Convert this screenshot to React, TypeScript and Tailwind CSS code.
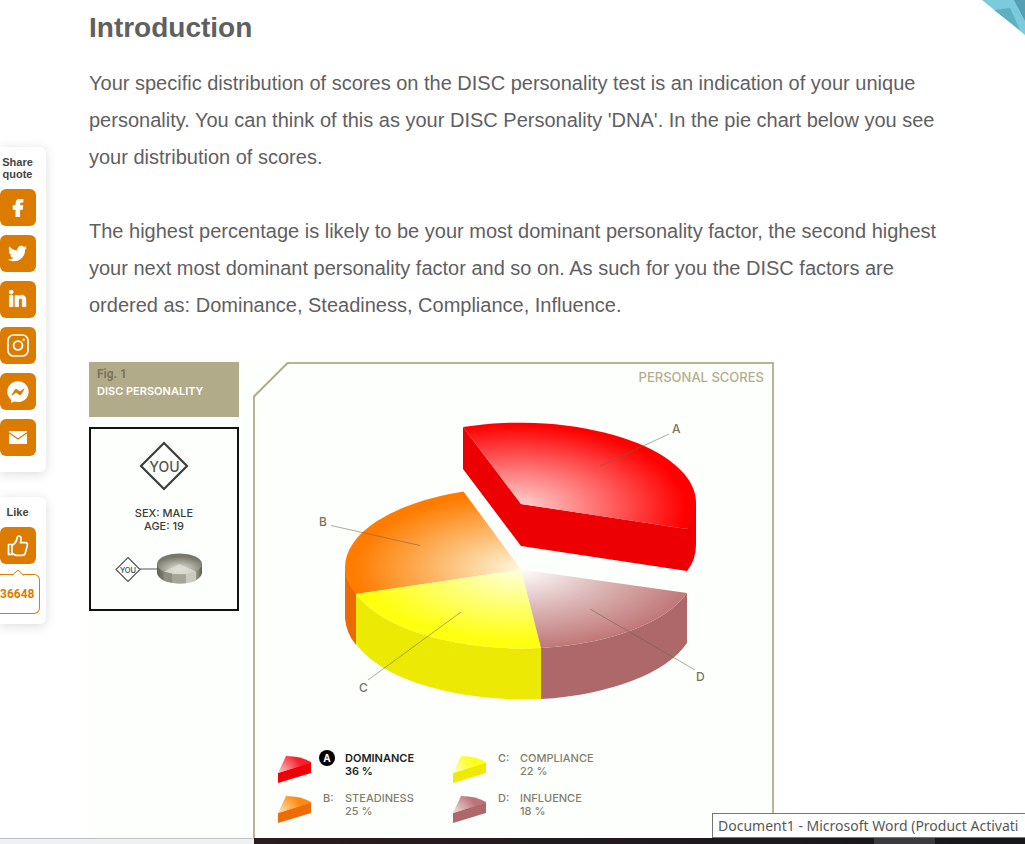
import type { ReactNode } from "react";
import {
  FaFacebookF,
  FaFacebookMessenger,
  FaLinkedinIn,
  FaTwitter,
} from "react-icons/fa";

function InstagramIcon() {
  return (
    <svg width="22" height="23" viewBox="0 0 22 23" fill="none" stroke="white" aria-hidden="true">
      <rect x="1" y="1" width="20" height="21" rx="5.5" strokeWidth="1.7" />
      <circle cx="11" cy="11.5" r="4.4" strokeWidth="1.9" />
      <circle cx="16.7" cy="5.8" r="1.2" fill="white" stroke="none" />
    </svg>
  );
}

function MailIcon() {
  return (
    <svg width="18" height="13" viewBox="0 0 18 13" aria-hidden="true">
      <rect width="18" height="13" fill="white" />
      <path d="M0 1.8 L9 8 L18 1.8" fill="none" stroke="#db7c00" strokeWidth="1.3" />
    </svg>
  );
}

function ThumbIcon() {
  return (
    <svg
      width="22"
      height="23"
      viewBox="0 0 22 23"
      fill="none"
      stroke="white"
      strokeWidth="1.7"
      strokeLinejoin="round"
      aria-hidden="true"
    >
      <path d="M1.5 10.5 H5 V20.5 H1.5 Z" />
      <path d="M5 11.5 C8 9.5 9.5 7.5 10 4.5 C10.2 2.6 10.8 2 12 2 C14.6 2.2 14.8 5 13.4 8.7 H18.5 C20.2 8.7 20.8 10 20.3 11.5 L18.3 19 C17.9 20.5 17 21.3 15.5 21.3 H9.5 C7.5 21.3 7 19.6 5 19.6" />
      <path d="M3 18.5 V18.7" />
    </svg>
  );
}

const shareLinks: { label: string; icon: ReactNode }[] = [
  { label: "Facebook", icon: <FaFacebookF size={18} stroke="white" strokeWidth={30} /> },
  { label: "Twitter", icon: <FaTwitter size={19} /> },
  { label: "LinkedIn", icon: <FaLinkedinIn size={19} stroke="white" strokeWidth={20} /> },
  { label: "Instagram", icon: <InstagramIcon /> },
  { label: "Messenger", icon: <FaFacebookMessenger size={22} /> },
  { label: "Email", icon: <MailIcon /> },
];

function SideButton({ label, children }: { label: string; children: ReactNode }) {
  return (
    <button
      type="button"
      aria-label={label}
      className="flex h-[37px] w-9 items-center justify-center rounded-md bg-[#db7c00] pr-px text-white"
    >
      {children}
    </button>
  );
}

function ShareBar() {
  return (
    <aside className="flex w-[46px] shrink-0 flex-col gap-[25px] pt-[147px] font-['Liberation_Sans',Arial,sans-serif] text-[11px] leading-3 font-bold text-[#444]">
      <section className="rounded-r-md bg-white pt-[9px] pb-4 shadow-[0_2px_12px_rgba(0,0,0,0.14)]">
        <h2 className="w-[35px] text-center">Share quote</h2>
        <div className="mt-[9px] flex flex-col gap-[9px]">
          {shareLinks.map((s) => (
            <SideButton key={s.label} label={s.label}>
              {s.icon}
            </SideButton>
          ))}
        </div>
      </section>
      <section className="rounded-r-md bg-white pt-[9px] pb-[10px] shadow-[0_2px_12px_rgba(0,0,0,0.14)]">
        <h2 className="mb-[9px] w-[35px] text-center">Like</h2>
        <SideButton label="Like">
          <ThumbIcon />
        </SideButton>
        <div className="relative mt-[10px] flex h-10 w-10 items-center rounded-r-md border border-l-0 border-[#db7c00]">
          <svg className="absolute -top-[6px] left-3" width="12" height="7" viewBox="0 0 12 7" aria-hidden="true">
            <path d="M0 6.500 L6 1 L12 6.500 V7 H0 Z" fill="white" />
            <path d="M0 6.500 L6 1 L12 6.500" fill="none" stroke="#db7c00" />
          </svg>
          <span className="text-xs text-[#db7c00] font-['Roboto',sans-serif]">36648</span>
        </div>
      </section>
    </aside>
  );
}

function ProfileCard() {
  return (
    <div className="flex h-[184px] flex-col items-center border-2 border-[#111] text-xs leading-[13px] font-medium text-[#3c3c38]">
      <svg className="mt-3" width="50" height="50" viewBox="0 0 50 50" aria-hidden="true">
        <path d="M25 2 L48 25 L25 48 L2 25 Z" fill="none" stroke="#3c3c3c" strokeWidth="2.2" />
        <text x="25.500" y="30.500" textAnchor="middle" fontSize="14" fontWeight="500" fill="#555">
          YOU
        </text>
      </svg>
      <p className="mt-4 text-center text-[11px]">
        SEX: MALE
        <br />
        AGE: 19
      </p>
      <svg className="mt-[18px] mr-[9px] shrink-0" width="90" height="36" viewBox="0 0 90 36" aria-hidden="true">
        <defs>
          <linearGradient id="coinSide">
            <stop offset="0" stopColor="#5f5f4c" />
            <stop offset="0.18" stopColor="#88887a" />
            <stop offset="0.5" stopColor="#b5b5aa" />
            <stop offset="0.75" stopColor="#d0d0c8" />
            <stop offset="1" stopColor="#5c5c48" />
          </linearGradient>
          <radialGradient id="coinTop" cx="0.5" cy="0.75" r="0.6">
            <stop offset="0" stopColor="#e6e6e0" />
            <stop offset="1" stopColor="#77776a" />
          </radialGradient>
        </defs>
        <path d="M13 6.5 L25 18.5 L13 30.5 L1 18.5 Z" fill="none" stroke="#555" strokeWidth="1.2" />
        <text x="13" y="21.5" textAnchor="middle" fontSize="7.5" fill="#444">
          YOU
        </text>
        <path d="M25 18 H42" stroke="#555" />
        <path d="M42 12 V22 C44 36 85 36 87 22 V12 Z" fill="url(#coinSide)" />
        <ellipse cx="64.5" cy="13" rx="22.5" ry="10.5" fill="url(#coinTop)" />
        <path d="M64.5 13 L49 20.5 Q57 23.5 64.5 23.5 Q74 23.5 81 20.5 Z" fill="#deded6" opacity="0.8" />
        <path d="M49 20.5 Q53 22 57 22.8 V31.8 Q52 31 49 29.500 Z" fill="#8f8f80" />
        <path d="M57 22.8 Q60 23.5 71 23.3 V32.300 Q62 33 57 31.8 Z" fill="#a5a598" />
        <path d="M71 23.3 Q77 22.5 81 20.5 V29.500 Q76 32 71 32.300 Z" fill="#cacac2" />
      </svg>
    </div>
  );
}

function PieChart() {
  return (
    <svg
      className="ml-[63px] block"
      width="395"
      height="290"
      viewBox="318 415 395 290"
      role="img"
      aria-label="Pie chart of personal scores"
    >
      <defs>
        <radialGradient id="red" gradientUnits="userSpaceOnUse" cx="0" cy="0" r="1" gradientTransform="translate(515 508) scale(180 88)">
          <stop offset="0" stopColor="#ffd8d8" />
          <stop offset="0.5" stopColor="#ff6868" />
          <stop offset="0.95" stopColor="#ff0000" />
        </radialGradient>
        <radialGradient id="orange" gradientUnits="userSpaceOnUse" cx="0" cy="0" r="1" gradientTransform="translate(521 569) scale(176 80)">
          <stop offset="0" stopColor="#fff8de" />
          <stop offset="0.45" stopColor="#fcbc70" />
          <stop offset="0.95" stopColor="#ff7c00" />
        </radialGradient>
        <radialGradient id="yellow" gradientUnits="userSpaceOnUse" cx="0" cy="0" r="1" gradientTransform="translate(521 569) scale(176 80)">
          <stop offset="0" stopColor="#ffffe0" />
          <stop offset="0.5" stopColor="#ffff68" />
          <stop offset="0.9" stopColor="#ffff10" />
        </radialGradient>
        <radialGradient id="rose" gradientUnits="userSpaceOnUse" cx="0" cy="0" r="1" gradientTransform="translate(521 569) scale(176 80)">
          <stop offset="0" stopColor="#ffffff" />
          <stop offset="0.5" stopColor="#dcb6b6" />
          <stop offset="1" stopColor="#c07676" />
        </radialGradient>
      </defs>
      <path d="M345 568 V618 Q346 633 356 645 V594 Z" fill="#ec6a06" />
      <path d="M521 569.5 L463.5 491.5 A176 80 0 0 0 345 568 Q345 582 356 594 Z" fill="url(#orange)" />
      <path d="M356 594 A176 80 0 0 0 541 648 V699 A176 80 0 0 1 356 644 Z" fill="#ecea05" />
      <path d="M521 569.5 L356 594 A176 80 0 0 0 541 648 Z" fill="url(#yellow)" />
      <path d="M541 648 A176 80 0 0 0 687 593 V643 A176 80 0 0 1 541 699 Z" fill="#ae686a" />
      <path d="M521 569.5 L541 648 A176 80 0 0 0 687 593 Z" fill="url(#rose)" />
      <path d="M463 427 V469 L521 546 L687 571 Q696 560 696 545 V500 L687 529 L521 504 Z" fill="#ed0004" />
      <path d="M521 504 L463 427 A176 80 0 0 1 696 502 Q696 516 687 529 Z" fill="url(#red)" />
      <g stroke="#66664c" strokeOpacity="0.55">
        <path d="M669 434 L600 466" />
        <path d="M331 525.5 L420 545.5" />
        <path d="M368 680 L461 612" />
        <path d="M590 609 L695 670" />
      </g>
      <g fill="#77735f" fontSize="12" fontWeight="500">
        <text x="672" y="433">A</text>
        <text x="319" y="526">B</text>
        <text x="359" y="692">C</text>
        <text x="696" y="681">D</text>
      </g>
    </svg>
  );
}

type Score = {
  letter: string;
  name: string;
  value: string;
  top: string;
  tip: string;
  side: string;
};

const scores: Score[] = [
  { letter: "A", name: "DOMINANCE", value: "36 %", top: "#f5202c", tip: "#ffc4c8", side: "#ee0006" },
  { letter: "C", name: "COMPLIANCE", value: "22 %", top: "#ffff10", tip: "#ffffb8", side: "#eeea04" },
  { letter: "B", name: "STEADINESS", value: "25 %", top: "#fb8a10", tip: "#ffe2b0", side: "#ee6c08" },
  { letter: "D", name: "INFLUENCE", value: "18 %", top: "#bd7278", tip: "#f0dcdc", side: "#ae686c" },
];

function Slice({ score }: { score: Score }) {
  const id = `slice-${score.letter}`;
  return (
    <svg className="mt-[5px] shrink-0" width="34" height="28" viewBox="0 0 34 28" aria-hidden="true">
      <defs>
        <radialGradient id={id} gradientUnits="userSpaceOnUse" cx="3" cy="18" r="22">
          <stop offset="0" stopColor={score.tip} />
          <stop offset="1" stopColor={score.top} />
        </radialGradient>
      </defs>
      <path d="M1 18 L34 7 V18 L1 28 Z" fill={score.side} />
      <path d="M1 18 L9 1 Q24 1 34 7 V8 Z" fill={`url(#${id})`} />
    </svg>
  );
}

function Legend() {
  return (
    <ul className="mt-[45px] grid grid-cols-[175px_175px] gap-y-[6px] pl-[22px] text-[11px] leading-[13px] font-medium text-[#827e6c]">
      {scores.map((s) => {
        const active = s.letter === "A";
        return (
          <li key={s.letter} className="flex h-[34px] items-start">
            <Slice score={s} />
            <span className="ml-3 w-[22px] shrink-0 pt-[2px]">
              {active ? (
                <span className="-mt-[2px] -ml-1 flex size-4 items-center justify-center rounded-full bg-black text-[10px] font-bold text-white">
                  A
                </span>
              ) : (
                `${s.letter}:`
              )}
            </span>
            <span className={active ? "pt-[2px] font-semibold text-[#222]" : "pt-[2px]"}>
              {s.name}
              <br />
              {s.value}
            </span>
          </li>
        );
      })}
    </ul>
  );
}

function Figure() {
  return (
    <figure className="mt-[38px] flex w-[685px] gap-[14px] bg-[#fcfffc] font-['Inter',sans-serif]">
      <div className="flex w-[150px] flex-col gap-[10px]">
        <figcaption className="h-[55px] bg-[#b2ab89] px-2 pt-1 text-[11px] leading-[17px] text-white">
          <span className="block font-['Roboto',sans-serif] text-xs leading-[17px] font-bold text-[#7b7560]">Fig. 1</span>
          <span className="block font-semibold">DISC PERSONALITY</span>
        </figcaption>
        <ProfileCard />
      </div>
      <div className="relative h-[500px] flex-1 border-2 border-[#b9b497]">
        <svg className="absolute -top-[2px] -left-[2px]" width="36" height="36" viewBox="0 0 36 36" aria-hidden="true">
          <path d="M0 0 H36 L0 36 Z" fill="#fcfffc" />
          <path d="M1 36 L1 34.5 L34.5 1 H36" fill="none" stroke="#b2ab89" strokeWidth="2" />
        </svg>
        <p className="pt-[5px] pr-2 text-right text-[13px] leading-4 font-medium text-[#b5ae8e]">PERSONAL SCORES</p>
        <div className="pt-[30px]">
          <PieChart />
        </div>
        <Legend />
      </div>
    </figure>
  );
}

export default function App() {
  return (
    <div className="relative flex h-screen flex-col overflow-hidden bg-white">
      <div className="flex min-h-0 flex-1 overflow-hidden">
        <ShareBar />
        <main className="min-w-0 flex-1 pr-[76px] pl-[43px] font-['Liberation_Sans',Arial,sans-serif] text-xl leading-[37px] text-[#5f6062]">
          <h1 className="pt-[9px] text-[28px] font-bold text-[#606060]">Introduction</h1>
          <p className="mt-[19px]">
            Your specific distribution of scores on the DISC personality test is an indication of your unique
            personality. You can think of this as your DISC Personality 'DNA'. In the pie chart below you see your
            distribution of scores.
          </p>
          <p className="mt-[37px]">
            The highest percentage is likely to be your most dominant personality factor, the second highest your
            next most dominant personality factor and so on. As such for you the DISC factors are ordered as:
            Dominance, Steadiness, Compliance, Influence.
          </p>
          <Figure />
        </main>
      </div>
      <footer className="flex h-[6px] shrink-0">
        <div className="w-[254px] border-t border-[#bfc1c5] bg-[#eef0f3]" />
        <div className="flex flex-1 justify-end bg-linear-to-r from-[#2a1c20] to-[#17171c] pr-[90px]">
          <div className="w-[61px] bg-[#3b3a3e]" />
        </div>
      </footer>
      <svg className="absolute top-0 right-0" width="43" height="35" viewBox="0 0 43 35" aria-hidden="true">
        <path d="M0 0 H43 V35 Z" fill="#7ccbdc" />
        <path d="M12 10 L28 8 L38 30 Z" fill="#5eb0c1" />
        <path d="M32 0 H43 V21 Z" fill="#559fb0" />
      </svg>
      <div
        role="tooltip"
        className="absolute right-0 bottom-[6px] h-[25px] w-[313px] overflow-hidden border border-r-0 border-[#767676] bg-white pl-[5px] font-['Noto_Sans',sans-serif] text-sm leading-[23px] whitespace-nowrap text-[#575757]"
      >
        Document1 - Microsoft Word (Product Activati
      </div>
    </div>
  );
}
